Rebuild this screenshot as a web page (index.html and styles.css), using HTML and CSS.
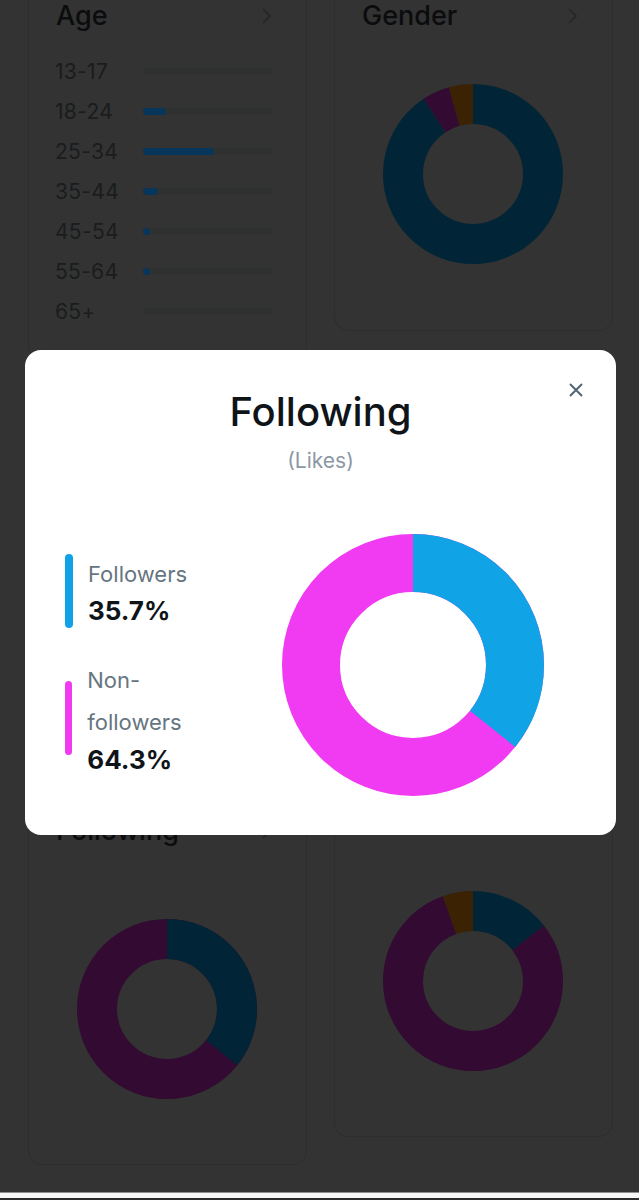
FILE: index.html
```html
<!DOCTYPE html>
<html lang="en">
<head>
<meta charset="utf-8">
<title>Audience – Following</title>
<link rel="stylesheet" href="styles.css">
</head>
<body>
<div class="viewport">
  <div class="columns">
    <div class="column">
      <section class="card card-age">
        <header class="card-head">
          <h2 class="card-title">Age</h2>
          <svg class="chev" viewBox="0 0 12 18" width="12" height="18"><path d="M3 2 L10 9 L3 16" /></svg>
        </header>
        <ul class="age-list">
          <li class="age-row"><span class="age-label">13-17</span><span class="track"></span></li>
          <li class="age-row"><span class="age-label">18-24</span><span class="track"><span class="fill" style="width:17.6%"></span></span></li>
          <li class="age-row"><span class="age-label">25-34</span><span class="track"><span class="fill" style="width:55%"></span></span></li>
          <li class="age-row"><span class="age-label">35-44</span><span class="track"><span class="fill" style="width:11.5%"></span></span></li>
          <li class="age-row"><span class="age-label">45-54</span><span class="track"><span class="fill" style="width:5.4%"></span></span></li>
          <li class="age-row"><span class="age-label">55-64</span><span class="track"><span class="fill" style="width:5.4%"></span></span></li>
          <li class="age-row"><span class="age-label">65+</span><span class="track"></span></li>
        </ul>
      </section>
      <section class="card card-hidden-left" aria-hidden="true"></section>
      <section class="card card-following">
        <header class="card-head">
          <h2 class="card-title">Following</h2>
          <svg class="chev" viewBox="0 0 12 18" width="12" height="18"><path d="M3 2 L10 9 L3 16" /></svg>
        </header>
        <svg class="mini-donut donut-following" viewBox="0 0 180 180" width="180" height="180">
          <g transform="rotate(-90 90 90)">
            <circle class="seg dim-purple" cx="90" cy="90" r="70" stroke-dasharray="439.82 439.82"/>
            <circle class="seg dim-blue" cx="90" cy="90" r="70" stroke-dasharray="157.0 439.82"/>
          </g>
        </svg>
      </section>
    </div>
    <div class="column">
      <section class="card card-gender">
        <header class="card-head">
          <h2 class="card-title">Gender</h2>
          <svg class="chev" viewBox="0 0 12 18" width="12" height="18"><path d="M3 2 L10 9 L3 16" /></svg>
        </header>
        <svg class="mini-donut donut-gender" viewBox="0 0 180 180" width="180" height="180">
          <g transform="rotate(-90 90 90)">
            <circle class="seg dim-blue" cx="90" cy="90" r="70" stroke-dasharray="398.5 439.82"/>
            <circle class="seg dim-purple" cx="90" cy="90" r="70" stroke-dasharray="21.6 439.82" stroke-dashoffset="-398.5"/>
            <circle class="seg dim-brown" cx="90" cy="90" r="70" stroke-dasharray="19.8 439.82" stroke-dashoffset="-420.1"/>
          </g>
        </svg>
      </section>
      <section class="card card-hidden-right" aria-hidden="true"></section>
      <section class="card card-verified">
        <svg class="mini-donut donut-verified" viewBox="0 0 180 180" width="180" height="180">
          <g transform="rotate(-90 90 90)">
            <circle class="seg dim-blue" cx="90" cy="90" r="70" stroke-dasharray="63.3 439.82"/>
            <circle class="seg dim-purple" cx="90" cy="90" r="70" stroke-dasharray="351.9 439.82" stroke-dashoffset="-63.3"/>
            <circle class="seg dim-brown" cx="90" cy="90" r="70" stroke-dasharray="24.7 439.82" stroke-dashoffset="-415.2"/>
          </g>
        </svg>
      </section>
    </div>
  </div>

  <div class="modal" role="dialog" aria-label="Following">
    <button class="modal-close" aria-label="Close">
      <svg viewBox="0 0 16 16" width="16" height="16"><path d="M2 2 L14 14 M14 2 L2 14" /></svg>
    </button>
    <h1 class="modal-title">Following</h1>
    <p class="modal-sub">(Likes)</p>
    <div class="modal-body">
      <ul class="legend">
        <li class="legend-item">
          <span class="legend-bar bar-blue"></span>
          <span class="legend-text">
            <span class="legend-label">Followers</span>
            <span class="legend-value">35.7%</span>
          </span>
        </li>
        <li class="legend-item">
          <span class="legend-bar bar-pink"></span>
          <span class="legend-text">
            <span class="legend-label">Non-followers</span>
            <span class="legend-value">64.3%</span>
          </span>
        </li>
      </ul>
      <svg class="big-donut" viewBox="0 0 262 262" width="262" height="262">
        <g transform="rotate(-90 131 131)">
          <circle class="big-seg pink" cx="131" cy="131" r="102" stroke-dasharray="640.88 640.88"/>
          <circle class="big-seg blue" cx="131" cy="131" r="102" stroke-dasharray="228.8 640.88"/>
        </g>
      </svg>
    </div>
  </div>
</div>
<div class="nav-edge"></div>
</body>
</html>
```

FILE: styles.css
```css
* { box-sizing: border-box; }

html, body {
  margin: 0;
  padding: 0;
}

body {
  height: 1200px;
  overflow: hidden;
  display: flex;
  flex-direction: column;
  background: #333333;
  font-family: Inter, "Noto Sans", "Liberation Sans", sans-serif;
  color: #0b0c0d;
}

.viewport {
  position: relative;
  flex: 1;
  min-height: 0;
  overflow: hidden;
}

.columns {
  display: grid;
  grid-template-columns: 279px 279px;
  column-gap: 27px;
  padding-left: 28px;
  margin-top: -22px;
}

.column {
  display: flex;
  flex-direction: column;
  gap: 24px;
}

.card {
  border: 1px solid #2c2d2d;
  border-radius: 14px;
  padding: 20px 34px 0 27px;
  background: #333333;
}

.card-head {
  display: flex;
  align-items: center;
  justify-content: space-between;
  height: 34px;
}

.card-title {
  margin: 0;
  font-size: 27px;
  font-weight: 500;
  line-height: 34px;
  color: #0b0c0d;
}

.chev {
  fill: none;
  stroke: #232526;
  stroke-width: 1.6;
}

/* Age card */
.card-age { height: 382px; }

.age-list {
  list-style: none;
  margin: 18px 0 0;
  padding: 0;
}

.age-row {
  display: flex;
  align-items: center;
  height: 40px;
}

.age-label {
  width: 87px;
  margin-left: -1px;
  font-size: 21px;
  color: #1a1c1d;
  letter-spacing: 0.3px;
}

.track {
  flex: 1;
  height: 7px;
  margin-left: 1px;
  border-radius: 4px;
  background: #2f3030;
  overflow: hidden;
  display: flex;
}

.fill {
  height: 7px;
  border-radius: 4px;
  background: #07365d;
}

.card-hidden-left { height: 385px; }
.card-hidden-right { height: 406px; }

/* donut cards */
.mini-donut {
  display: block;
  margin: 0 auto;
  position: relative;
  left: 3px;
}

.card-gender { height: 353px; }
.card-gender .mini-donut { margin-top: 51px; }

.card-following { height: 372px; }
.card-following .mini-donut { margin-top: 71px; }

.card-verified { height: 352px; padding-top: 105px; }

.seg {
  fill: none;
  stroke-width: 40;
}

.dim-blue { stroke: #012537; }
.dim-purple { stroke: #330a31; }
.dim-brown { stroke: #3a2203; }

/* Modal */
.modal {
  position: absolute;
  left: 25px;
  top: 350px;
  width: 591px;
  height: 485px;
  background: #ffffff;
  border-radius: 16px;
  padding: 38px 72px 39px 40px;
}

.modal-close {
  position: absolute;
  top: 32px;
  right: 32px;
  width: 16px;
  height: 16px;
  padding: 0;
  border: 0;
  background: none;
  display: flex;
}

.modal-close svg {
  fill: none;
  stroke: #536471;
  stroke-width: 2;
}

.modal-title {
  width: fit-content;
  margin: 0 auto;
  position: relative;
  left: 16px;
  font-size: 40px;
  font-weight: 500;
  line-height: 48px;
  color: #0f1419;
}

.modal-sub {
  width: fit-content;
  margin: 12px auto 0;
  position: relative;
  left: 16px;
  font-size: 21px;
  line-height: 26px;
  color: #8b98a5;
}

.modal-body {
  display: flex;
  align-items: center;
  justify-content: space-between;
  margin-top: 60px;
}

.legend {
  list-style: none;
  margin: 0;
  padding: 0;
  width: 156px;
  display: flex;
  flex-direction: column;
  gap: 31px;
}

.legend-item {
  display: flex;
  align-items: center;
  gap: 15px;
}

.legend-bar {
  width: 8px;
  height: 74px;
  border-radius: 4px;
  flex-shrink: 1;
}

.bar-blue { background: #0fa2e6; }
.bar-pink { background: #f03bf1; }

.legend-text {
  display: flex;
  flex-direction: column;
}

.legend-label {
  font-size: 22px;
  line-height: 42px;
  color: #66757f;
}

.legend-item:first-child .legend-label { line-height: 40px; }

.legend-value {
  font-size: 26px;
  font-weight: 700;
  line-height: 34px;
  color: #0f1419;
}

.big-donut { display: block; }

.big-seg {
  fill: none;
  stroke-width: 58;
}

.big-seg.blue { stroke: #10a3e6; }
.big-seg.pink { stroke: #f13bf2; }

.nav-edge {
  height: 8px;
  flex: none;
  background: #f7f7f7;
  border-top: 1px solid #8f8f8f;
  border-bottom: 2px solid #2b2b2b;
}
```
